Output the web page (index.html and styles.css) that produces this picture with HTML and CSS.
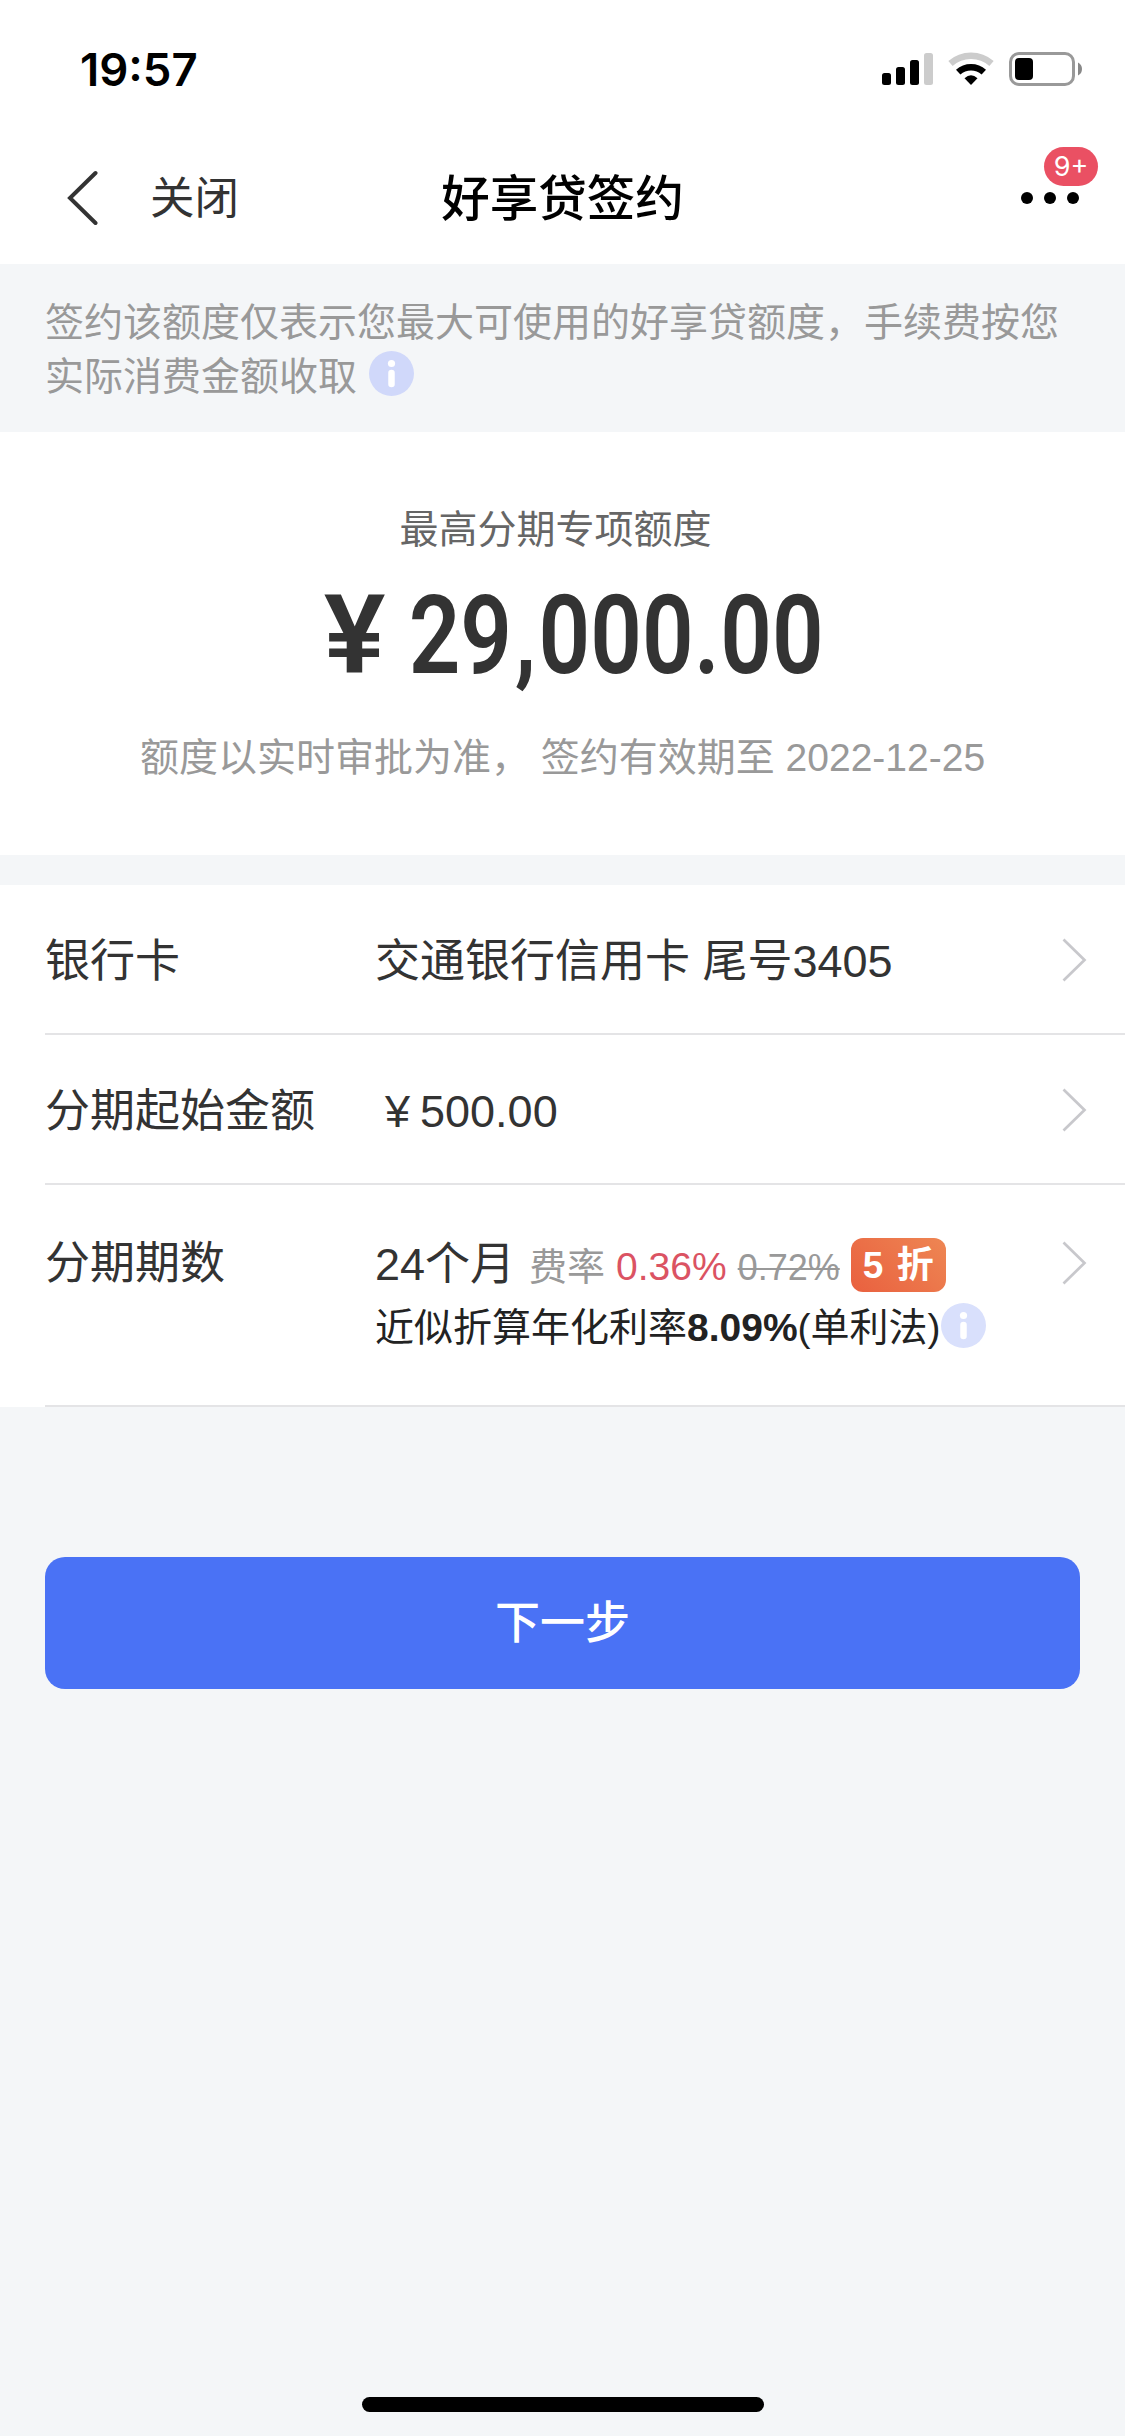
FILE: index.html
```html
<!DOCTYPE html>
<html lang="zh-CN">
<head>
<meta charset="utf-8">
<title>好享贷签约</title>
<link rel="stylesheet" href="styles.css">
</head>
<body>
<div class="screen">
  <header class="top">
    <div class="status">
      <span class="time">19:57</span>
      <svg class="status-icons" width="200" height="34" viewBox="0 0 200 34">
        <rect x="0" y="21" width="9" height="12" rx="2.5"/>
        <rect x="14" y="15" width="9" height="18" rx="2.5"/>
        <rect x="28" y="8" width="9" height="25" rx="2.5"/>
        <rect x="42" y="1" width="9" height="32" rx="2.5" fill="#ccc"/>
        <path d="M68.5 11.5A31 31 0 0 1 109.5 11.5" fill="none" stroke="#ccc" stroke-width="6.5"/>
        <path d="M76.2 20.2A19 19 0 0 1 101.8 20.2" fill="none" stroke="#000" stroke-width="6.5"/>
        <path d="M82.5 26.2Q89 20.5 95.5 26.2L89 33Z"/>
        <rect x="128.500" y="1.500" width="63" height="31" rx="8.500" fill="none" stroke="#999" stroke-width="3"/>
        <rect x="133" y="6" width="18" height="22" rx="4"/>
        <path d="M196 10.500Q200 12.500 200 17T196 23.500Z" fill="#888"/>
      </svg>
    </div>
    <nav class="nav">
      <div class="nav-left">
        <svg class="back" width="33" height="56" viewBox="0 0 33 56"><path d="M30.500 3L5 28L30.500 53" fill="none" stroke="#333" stroke-width="4" stroke-linecap="round"/></svg>
        <span class="close">关闭</span>
      </div>
      <h1 class="title">好享贷签约</h1>
      <div class="more">
        <i class="dot"></i><i class="dot"></i><i class="dot"></i>
        <span class="count">9+</span>
      </div>
    </nav>
  </header>

  <p class="notice">签约该额度仅表示您最大可使用的好享贷额度，手续费按您实际消费金额收取<svg class="info info-notice" width="45" height="45" viewBox="0 0 45 45"><circle cx="22.500" cy="22.500" r="22.500" fill="#d0d8fa"/><circle cx="22.500" cy="12.500" r="3.600" fill="#fff"/><path d="M22.500 22V33" stroke="#fff" stroke-width="6.500" stroke-linecap="round"/></svg></p>

  <section class="quota">
    <div class="quota-label">最高分期专项额度</div>
    <div class="amount"><span class="yen">¥</span>29<span class="comma">,</span>000<span class="point">.</span>00</div>
    <div class="quota-note">额度以实时审批为准， 签约有效期至 2022-12-25</div>
  </section>

  <section class="list">
    <div class="row">
      <div class="label">银行卡</div>
      <div class="value">交通银行信用卡 尾号3405</div>
      <svg class="arrow" width="25" height="44" viewBox="0 0 25 44"><path d="M1.500 1.500L22.500 22L1.500 42.500" fill="none" stroke="#c8c8cc" stroke-width="2.700"/></svg>
    </div>
    <div class="row">
      <div class="label">分期起始金额</div>
      <div class="value"><span class="small-yen">¥</span>500.00</div>
      <svg class="arrow" width="25" height="44" viewBox="0 0 25 44"><path d="M1.500 1.500L22.500 22L1.500 42.500" fill="none" stroke="#c8c8cc" stroke-width="2.700"/></svg>
    </div>
    <div class="row row-term">
      <div class="label">分期期数</div>
      <div class="value">
        <div class="term">24个月<span class="rate-label">费率</span><span class="rate">0.36%</span><s class="old-rate">0.72%</s><span class="discount">5 折</span></div>
        <div class="annual">近似折算年化利率<b>8.09%</b>(单利法)<svg class="info" width="45" height="45" viewBox="0 0 45 45"><circle cx="22.500" cy="22.500" r="22.500" fill="#d9e0fc"/><circle cx="22.500" cy="12.500" r="3.600" fill="#fff"/><path d="M22.500 22V33" stroke="#fff" stroke-width="6.500" stroke-linecap="round"/></svg></div>
      </div>
      <svg class="arrow" width="25" height="44" viewBox="0 0 25 44"><path d="M1.500 1.500L22.500 22L1.500 42.500" fill="none" stroke="#c8c8cc" stroke-width="2.700"/></svg>
    </div>
  </section>

  <button class="next">下一步</button>
  <div class="home-bar"></div>
</div>
</body>
</html>
```
FILE: styles.css
```css
* { box-sizing: border-box; }

body {
  margin: 0;
  background: #f4f6f8;
  color: #333;
  font-family: "Liberation Sans", "Noto Sans CJK SC", sans-serif;
}

.screen {
  width: 1125px;
  height: 2436px;
  display: flex;
  flex-direction: column;
}

.top {
  height: 264px;
  background: #fff;
}

.status {
  height: 132px;
  padding: 42px 43px 0 80px;
  display: flex;
  justify-content: space-between;
}

.time {
  padding-top: 1px;
  font: 600 45.500px/54px Inter, sans-serif;
  color: #000;
}

.status-icons { margin-top: 10px; }

.nav {
  height: 132px;
  padding: 0 46px 0 65px;
  display: grid;
  grid-template-columns: 1fr auto 1fr;
  align-items: center;
}

.nav-left {
  display: flex;
  align-items: center;
  gap: 52px;
}

.close {
  padding-top: 2px;
  font-size: 44.500px;
  line-height: 60px;
}

.title {
  margin: 0 0 0 -19px;
  padding-top: 2px;
  font-size: 48.500px;
  font-weight: 500;
  line-height: 60px;
  color: #000;
}

.more {
  position: relative;
  justify-self: end;
  display: flex;
  gap: 11px;
}

.dot {
  width: 12px;
  height: 12px;
  border-radius: 50%;
  background: #000;
}

.count {
  position: absolute;
  right: -19px;
  bottom: 18px;
  width: 54px;
  height: 39px;
  border-radius: 20px;
  background: #ea5063;
  color: #fff;
  font: 400 27px/39px Inter, sans-serif;
  text-align: center;
}

.notice {
  height: 168px;
  margin: 0;
  padding: 32px 45px 0;
  font-size: 39px;
  line-height: 54px;
  color: #999;
}

.info {
  vertical-align: top;
  margin-top: 2px;
}

.info-notice {
  margin-top: 1px;
  margin-left: 12px;
}

.quota {
  height: 423px;
  padding-top: 71px;
  background: #fff;
  text-align: center;
}

.quota-label {
  padding-right: 14px;
  font-size: 39px;
  line-height: 54px;
  color: #666;
}

.amount {
  margin: 24px 0 40px;
  padding-left: 35px;
  font: 600 109px/110px Roboto, sans-serif;
  transform: scaleX(0.83);
  white-space: nowrap;
}

.yen {
  display: inline-block;
  margin-right: 36px;
  transform: scaleX(1.28);
}

.comma,
.point {
  display: inline-block;
  width: 32px;
  text-align: center;
}

.quota-note {
  font-size: 39px;
  line-height: 54px;
  color: #999;
}

.list {
  margin-top: 30px;
  padding-left: 45px;
  background: #fff;
}

.row {
  height: 150px;
  padding: 46px 38px 0 0;
  display: grid;
  grid-template-columns: 330px 1fr 25px;
  border-bottom: 2px solid #e4e4e6;
  font-size: 45px;
  line-height: 62px;
}

.row-term {
  height: 222px;
  padding-top: 48px;
}

.arrow { margin-top: 7px; }

.row-term .arrow { margin-top: 8px; }

.small-yen { margin: 0 10px; }

.term {
  height: 68px;
  padding-top: 1px;
  display: flex;
  align-items: baseline;
  white-space: nowrap;
}

.rate-label {
  margin-left: 14px;
  font-size: 38px;
  color: #999;
}

.rate {
  margin-left: 11px;
  font-size: 39px;
  color: #db5363;
}

.old-rate {
  margin-left: 11px;
  font-size: 36px;
  color: #999;
  text-decoration-thickness: 2px;
}

.discount {
  width: 95px;
  height: 54px;
  align-self: flex-start;
  margin-top: 4px;
  margin-left: 11px;
  border-radius: 12px;
  background: linear-gradient(45deg, #e9603f, #ee8653);
  color: #fff;
  font-size: 37px;
  font-weight: 700;
  line-height: 56px;
  text-align: center;
  word-spacing: 3px;
}

.annual {
  font-size: 39px;
  line-height: 54px;
  color: #222;
  white-space: nowrap;
}

.next {
  height: 132px;
  margin: 150px 45px 0;
  padding-top: 3px;
  border: 0;
  border-radius: 20px;
  background: #4a72f5;
  color: #fff;
  font: 500 45px/62px "Liberation Sans", "Noto Sans CJK SC", sans-serif;
}

.home-bar {
  width: 402px;
  height: 15px;
  margin: auto auto 24px;
  border-radius: 8px;
  background: #000;
}
```
